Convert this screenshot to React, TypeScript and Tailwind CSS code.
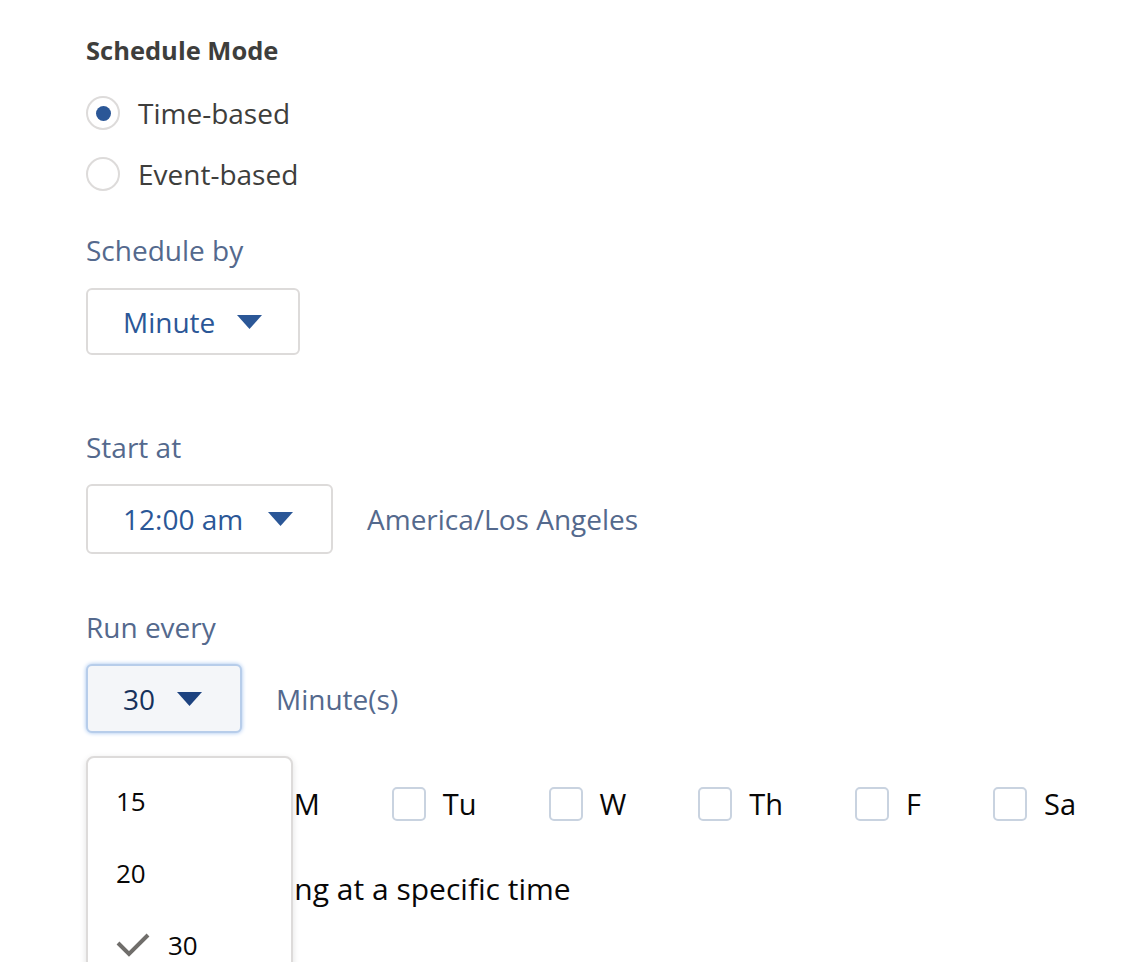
import { useState } from "react";

const days = ["Su", "M", "Tu", "W", "Th", "F", "Sa"];
const intervals = ["15", "20", "30"];

function Caret({ className = "" }: { className?: string }) {
  return (
    <svg width="25" height="14" viewBox="0 0 25 14" className={className}>
      <polygon points="0,0 25,0 12.5,14" fill="currentColor" />
    </svg>
  );
}

function Radio({ label, checked }: { label: string; checked?: boolean }) {
  return (
    <label className="flex h-[40px] items-center gap-[18px]">
      <span className="flex h-[34px] w-[34px] items-center justify-center rounded-full border-2 border-[#dddbda] bg-white">
        {checked && <span className="h-[15px] w-[15px] rounded-full bg-[#2b5797]" />}
      </span>
      <span className="text-[28px] text-[#3e3e3c]">{label}</span>
    </label>
  );
}

function Checkbox({ label }: { label: string }) {
  return (
    <label className="flex items-center gap-[17px]">
      <span className="h-[34px] w-[34px] rounded-[5px] border-2 border-[#c9d3e0] bg-white" />
      <span className="text-[29px] text-[#080707]">{label}</span>
    </label>
  );
}

export default function App() {
  const [open] = useState(true);

  return (
    <div
      className="min-h-screen bg-white pl-[86px] pt-[32px]"
      style={{ fontFamily: "'Open Sans', 'Noto Sans', sans-serif" }}
    >
      <h2 className="h-[36px] text-[25.5px] font-bold leading-[36px] text-[#3e3e3c]">
        Schedule Mode
      </h2>

      <div className="mt-[25px] flex flex-col gap-[21px]">
        <Radio label="Time-based" checked />
        <Radio label="Event-based" />
      </div>

      <div className="mt-[38px] h-[36px] text-[28px] leading-[36px] text-[#54698d]">
        Schedule by
      </div>
      <button className="mt-[20px] flex h-[67px] w-[214px] items-center gap-[22px] rounded-[6px] border-2 border-[#dddbda] bg-white pl-[35px] text-[28px] text-[#2b5797]">
        Minute
        <Caret />
      </button>

      <div className="mt-[74px] h-[36px] text-[28px] leading-[36px] text-[#54698d]">
        Start at
      </div>
      <div className="mt-[19px] flex items-center gap-[34px]">
        <button className="flex h-[70px] w-[247px] items-center gap-[25px] rounded-[6px] border-2 border-[#dddbda] bg-white pl-[35px] text-[28px] text-[#2b5797]">
          12:00 am
          <Caret />
        </button>
        <span className="text-[28px] text-[#54698d]">America/Los Angeles</span>
      </div>

      <div className="mt-[55px] h-[36px] text-[28px] leading-[36px] text-[#54698d]">
        Run every
      </div>
      <div className="mt-[19px] flex items-center gap-[34px]">
        <div className="relative">
          <button className="flex h-[69px] w-[156px] items-center gap-[22px] rounded-[6px] border-2 border-[#b7cdea] bg-[#f4f6f9] pl-[35px] text-[28px] text-[#16325c] shadow-[0_0_4px_#9fc1ee]">
            30
            <Caret className="text-[#1d4380]" />
          </button>
          {open && (
            <div className="absolute left-0 top-[calc(100%+23px)] z-10 h-[240px] w-[207px] rounded-[8px] border-2 border-[#dddbda] bg-white pt-[7px] shadow-[0_2px_6px_rgba(0,0,0,0.12)]">
              {intervals.map((v) => (
                <div key={v} className="flex h-[72px] items-center pl-[28px] text-[26px] text-[#080707]">
                  {v === "30" ? (
                    <span className="flex items-center gap-[18px]">
                      <svg width="34" height="24" viewBox="0 0 34 24" className="text-[#706e6b]">
                        <polyline
                          points="2,10 13,21 32,2"
                          fill="none"
                          stroke="currentColor"
                          strokeWidth="4"
                        />
                      </svg>
                      {v}
                    </span>
                  ) : (
                    v
                  )}
                </div>
              ))}
            </div>
          )}
        </div>
        <span className="text-[28px] text-[#54698d]">Minute(s)</span>
      </div>

      <div className="mt-[51px] flex h-[40px] items-center gap-[72px]">
        {days.map((d) => (
          <Checkbox key={d} label={d} />
        ))}
      </div>

      <div className="mt-[44px] flex h-[40px] items-center gap-[28px]">
        <span className="h-[34px] w-[34px] rounded-[5px] border-2 border-[#c9d3e0] bg-white" />
        <span className="text-[30px] text-[#080707]">Stop running at a specific time</span>
      </div>
    </div>
  );
}
